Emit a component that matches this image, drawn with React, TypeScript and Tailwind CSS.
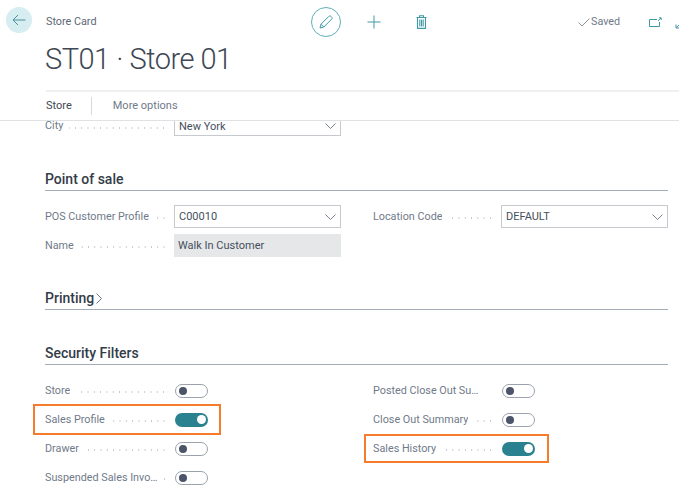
import React from 'react';

const FONT = "font-['Roboto','Open_Sans',sans-serif]";

function Leader() {
    return <span className="mx-[6px] mt-[3px] h-[2px] min-w-0 flex-1 bg-[radial-gradient(circle,#c3c8cf_0.8px,transparent_1px)] bg-[length:6.3px_2px] bg-right" />;
}

function Chevron() {
    return (
        <svg width="11" height="6" viewBox="0 0 11 6" fill="none" className="shrink-0">
            <path d="M0.5 0.5L5.5 5.5L10.5 0.5" stroke="#6b7684" strokeWidth="0.9" />
        </svg>
    );
}

function Select({ value }: { value: string }) {
    return (
        <div className="flex h-[23px] w-[167px] items-center justify-between border border-[#c6c9cd] bg-white pl-[4px] pr-[4px] text-[11px] text-[#454f5c]">
            <span className="pt-[1px]">{value}</span>
            <Chevron />
        </div>
    );
}

function Field({ label, right, children }: { label: string; right?: boolean; children: React.ReactNode }) {
    return (
        <div className="flex h-[29px] items-center">
            <div className={`flex items-center pr-[1px] ${right ? 'w-[128px]' : 'w-[129px]'}`}>
                <span className="max-w-[113px] truncate pt-[1px] text-[10.8px] text-[#6f7a89]">{label}</span>
                <Leader />
            </div>
            {children}
        </div>
    );
}

function Toggle({ on }: { on?: boolean }) {
    if (on) {
        return (
            <div className="ml-[1px] flex h-[14px] w-[33px] items-center justify-end rounded-full bg-[#2a8290] pr-[2px]">
                <span className="h-[9px] w-[9px] rounded-full bg-white" />
            </div>
        );
    }
    return (
        <div className="ml-[1px] flex h-[14px] w-[33px] items-center rounded-full border border-[#9aa2ad] bg-white pl-[3px]">
            <span className="h-[8px] w-[8px] rounded-full bg-[#4b5468]" />
        </div>
    );
}

function Highlight({ className }: { className: string }) {
    return <div className={`pointer-events-none absolute border-2 border-[#f47c2c] ${className}`} />;
}

function SectionTitle({ children }: { children: React.ReactNode }) {
    return (
        <div className="flex h-[21px] items-start border-b border-[#a3adba] text-[14px] font-medium leading-[18px] text-[#333c48]">
            {children}
        </div>
    );
}

export default function App() {
    return (
        <div className={`h-[500px] w-[679px] overflow-hidden bg-white ${FONT}`}>
            {/* Top bar */}
            <div className="relative h-[90px]">
                <div className="absolute left-[6px] top-[7px] flex h-[26px] w-[26px] items-center justify-center rounded-full bg-[#d6eef1]">
                    <svg width="14" height="12" viewBox="0 0 14 12" fill="none">
                        <path d="M13.5 6H1M6 1L1 6L6 11" stroke="#4d8f9a" strokeWidth="1" />
                    </svg>
                </div>
                <div className="flex h-[44px] items-center pl-[46px] pr-0">
                    <span className="mt-[1px] w-[265px] shrink-0 text-[10.8px] text-[#5c6775]">Store Card</span>
                    <div className="flex h-[30px] w-[30px] shrink-0 items-center justify-center rounded-full border border-[#5fb0ba]">
                        <svg width="14" height="14" viewBox="0 0 14 14" fill="none" stroke="#3f9aa6" strokeWidth="1">
                            <path d="M1 13L2 9.2L9.8 1.4C10.4 0.8 11.4 0.8 12 1.4L12.6 2C13.2 2.6 13.2 3.6 12.6 4.2L4.8 12L1 13Z" />
                            <path d="M2 9.2L4.8 12" />
                        </svg>
                    </div>
                    <svg width="14" height="14" viewBox="0 0 14 14" fill="none" stroke="#3f9aa6" strokeWidth="1" className="ml-[26px] shrink-0">
                        <path d="M7 0.5V13.5M0.5 7H13.5" />
                    </svg>
                    <svg width="11" height="14" viewBox="0 0 11 14" fill="none" stroke="#3f9aa6" strokeWidth="1.1" className="ml-[35px] shrink-0">
                        <path d="M0.5 2.5H10.5M3.5 2.5V0.8H7.5V2.5M1.5 2.5V13.4H9.5V2.5" />
                        <path d="M3.8 4.5V11.5M5.5 4.5V11.5M7.2 4.5V11.5" />
                    </svg>
                    <svg width="12" height="9" viewBox="0 0 12 9" fill="none" className="ml-[151px] shrink-0">
                        <path d="M0.5 4.5L4 8L11.5 0.5" stroke="#7d8793" strokeWidth="0.9" />
                    </svg>
                    <span className="ml-[1px] mt-[1px] w-[30px] shrink-0 text-[10.8px] text-[#6f7a89]">Saved</span>
                    <svg width="13" height="11" viewBox="0 0 13 11" fill="none" stroke="#3f9aa6" strokeWidth="1" className="ml-[28px] shrink-0">
                        <path d="M8 2.5H0.5V9.5H10.5V5" />
                        <path d="M9 4L12 1M10 0.8H12.2V3" />
                    </svg>
                    <svg width="7" height="7" viewBox="0 0 7 7" fill="none" stroke="#3f9aa6" strokeWidth="1" className="ml-[13px] mt-[6px] shrink-0">
                        <path d="M6 1L1 6M1 2.5V6H4.5" />
                    </svg>
                </div>
                <h1 className="pl-[45px] text-[29px] font-light leading-[30px] tracking-[-0.5px] text-[#3e4753]">ST01 · Store 01</h1>
            </div>

            {/* Tabs */}
            <div className="ml-[46px] flex h-[30px] items-center border-t-2 border-[#f0f0f0] text-[11px]">
                <span className="text-[#3e4753]">Store</span>
                <span className="ml-[19px] h-[18px] w-px bg-[#d5d8dc]" />
                <span className="ml-[21px] text-[#6f7a89]">More options</span>
            </div>

            {/* Scrolled form */}
            <div className="border-t border-[#dfe1e3]">
                <div className="ml-[45px] mr-[11px] flex h-[15px] items-end overflow-hidden">
                    <div className="flex w-[129px] items-center self-start pr-[1px]">
                        <span className="-mt-[1px] text-[10.8px] leading-[12px] text-[#6f7a89]">City</span>
                        <Leader />
                    </div>
                    <div className="flex h-[15px] w-[167px] items-start justify-between border-x border-b border-[#c6c9cd] px-[4px] text-[11px] leading-[11px] text-[#454f5c]">
                        <span>New York</span>
                        <span className="mt-[2px]"><Chevron /></span>
                    </div>
                </div>

                <div className="ml-[45px] mr-[11px] mt-[34px]">
                    <SectionTitle>Point of sale</SectionTitle>
                    <div className="mt-[11px] grid grid-cols-[296px_295px] gap-x-[32px]">
                        <div>
                            <Field label="POS Customer Profile"><Select value="C00010" /></Field>
                            <Field label="Name">
                                <div className="flex h-[23px] w-[167px] items-center bg-[#e6e7e8] pl-[4px] pt-[1px] text-[11px] text-[#454f5c]">Walk In Customer</div>
                            </Field>
                        </div>
                        <div>
                            <Field right label="Location Code"><Select value="DEFAULT" /></Field>
                        </div>
                    </div>

                    <div className="mt-[29px]">
                        <SectionTitle>
                            Printing
                            <svg width="6" height="11" viewBox="0 0 6 11" fill="none" className="ml-[2px] mt-[4px]">
                                <path d="M0.5 0.5L5.5 5.5L0.5 10.5" stroke="#5c6775" strokeWidth="0.9" />
                            </svg>
                        </SectionTitle>
                    </div>

                    <div className="mt-[34px]">
                        <SectionTitle>Security Filters</SectionTitle>
                        <div className="mt-[11px] grid grid-cols-[296px_295px] gap-x-[32px]">
                            <div>
                                <Field label="Store"><Toggle /></Field>
                                <div className="relative">
                                    <Field label="Sales Profile"><Toggle on /></Field>
                                    <Highlight className="-left-[12px] -top-[1px] h-[31px] w-[188px]" />
                                </div>
                                <Field label="Drawer"><Toggle /></Field>
                                <Field label="Suspended Sales Invoices"><Toggle /></Field>
                            </div>
                            <div>
                                <Field right label="Posted Close Out Summary"><Toggle /></Field>
                                <Field right label="Close Out Summary"><Toggle /></Field>
                                <div className="relative">
                                    <Field right label="Sales History"><Toggle on /></Field>
                                    <Highlight className="-left-[9px] top-0 h-[29px] w-[185px]" />
                                </div>
                            </div>
                        </div>
                    </div>
                </div>
            </div>
        </div>
    );
}
